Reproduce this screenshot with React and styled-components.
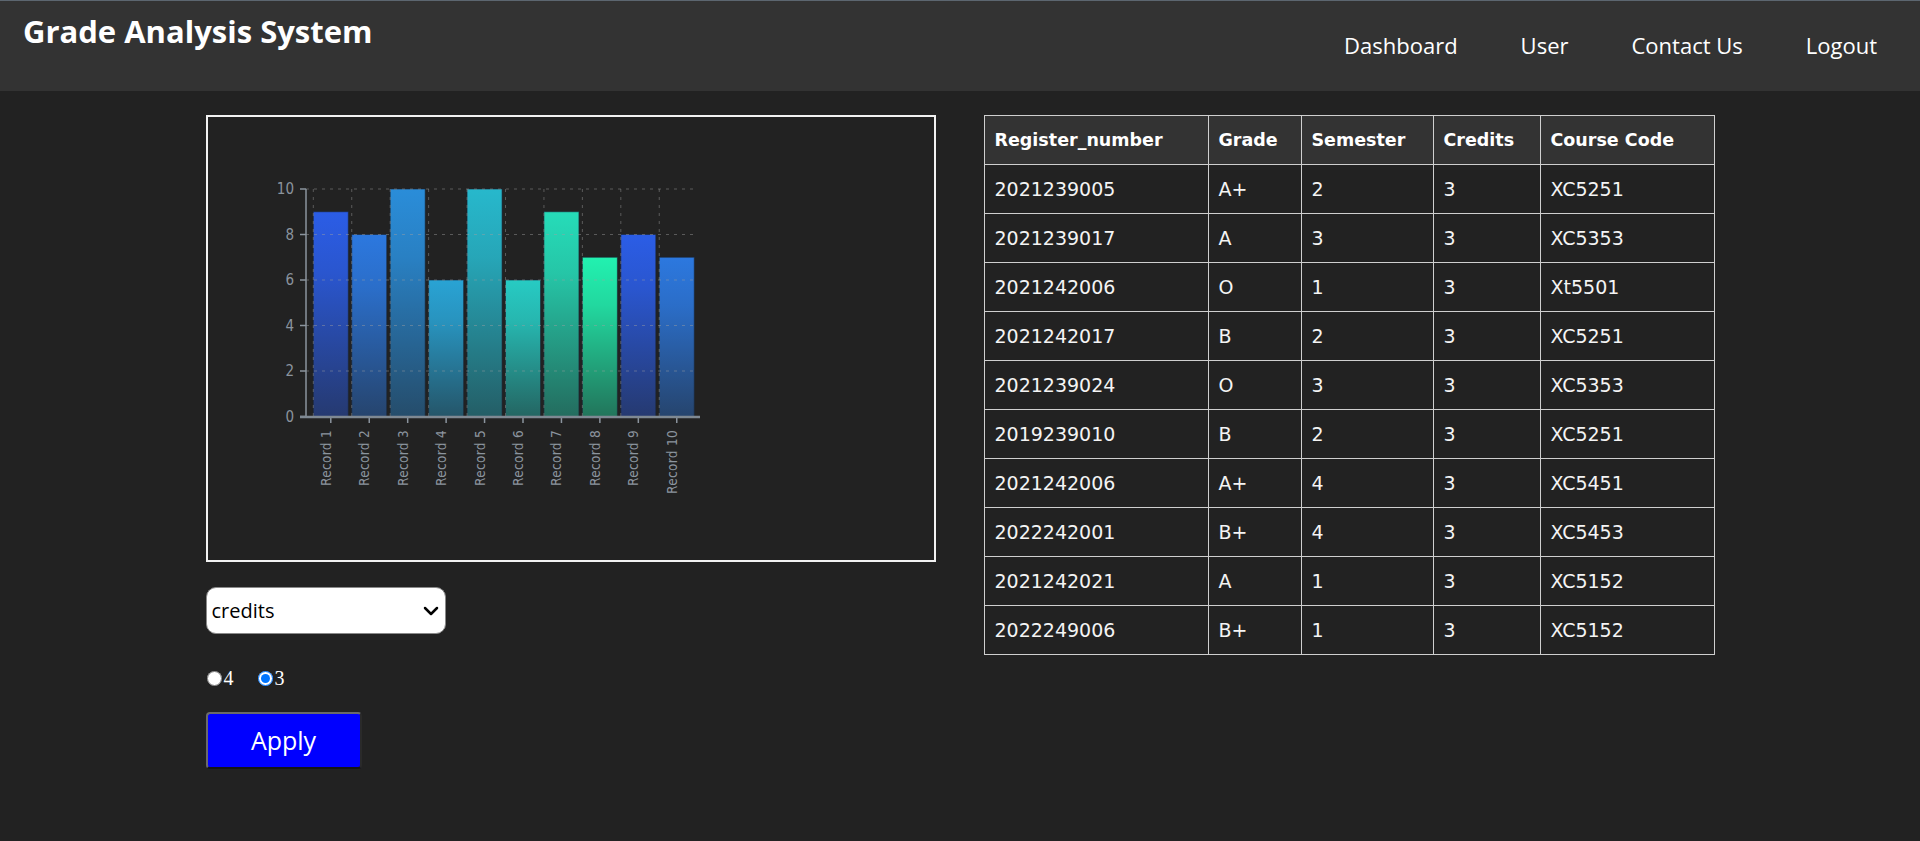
import React from 'react'
import styled, { createGlobalStyle } from 'styled-components'
import { ChevronDown } from 'lucide-react'

const GlobalStyle = createGlobalStyle`
  body {
    margin: 0;
    background: #222222;
    font-family: 'Open Sans', 'DejaVu Sans', sans-serif;
  }
`

const records = [
  { reg: '2021239005', grade: 'A+', sem: '2', credits: '3', code: 'XC5251' },
  { reg: '2021239017', grade: 'A', sem: '3', credits: '3', code: 'XC5353' },
  { reg: '2021242006', grade: 'O', sem: '1', credits: '3', code: 'Xt5501' },
  { reg: '2021242017', grade: 'B', sem: '2', credits: '3', code: 'XC5251' },
  { reg: '2021239024', grade: 'O', sem: '3', credits: '3', code: 'XC5353' },
  { reg: '2019239010', grade: 'B', sem: '2', credits: '3', code: 'XC5251' },
  { reg: '2021242006', grade: 'A+', sem: '4', credits: '3', code: 'XC5451' },
  { reg: '2022242001', grade: 'B+', sem: '4', credits: '3', code: 'XC5453' },
  { reg: '2021242021', grade: 'A', sem: '1', credits: '3', code: 'XC5152' },
  { reg: '2022249006', grade: 'B+', sem: '1', credits: '3', code: 'XC5152' },
]

const bars = [
  { value: 9, color: '#2b5de6' },
  { value: 8, color: '#2c78df' },
  { value: 10, color: '#2a8dd9' },
  { value: 6, color: '#29a3d4' },
  { value: 10, color: '#27b8cc' },
  { value: 6, color: '#27cbc3' },
  { value: 9, color: '#26dcb9' },
  { value: 7, color: '#22f1b0' },
  { value: 8, color: '#2b5de6' },
  { value: 7, color: '#2c78df' },
]

// chart geometry (svg local coords)
const X0 = 105.3
const BAND = 38.44
const BW = 35
const Y0 = 299.5
const UNIT = 22.75
const AXIS_X = 98

const Header = styled.header`
  display: flex;
  justify-content: space-between;
  align-items: flex-start;
  height: 91px;
  box-sizing: border-box;
  background: #333333;
  border-top: 1px solid #5c6670;
`

const Title = styled.h1`
  margin: 9px 0 0 23px;
  color: #ffffff;
  font-size: 31px;
  font-weight: 700;
  line-height: normal;
`

const Nav = styled.ul`
  display: flex;
  gap: 63px;
  align-self: center;
  list-style: none;
  margin: 0;
  padding: 0 43px 3px 0;
`

const NavLink = styled.a`
  color: #ffffff;
  font-size: 22px;
  text-decoration: none;
`

const Main = styled.main`
  display: flex;
  justify-content: center;
  align-items: flex-start;
  gap: 48px;
  padding-top: 24px;
`

const LeftColumn = styled.section`
  display: flex;
  flex-direction: column;
  align-items: flex-start;
  width: 730px;
`

const ChartBox = styled.div`
  width: 730px;
  height: 447px;
  box-sizing: border-box;
  border: 2px solid #f2f2f2;
`

const AxisText = styled.text`
  fill: #8b949e;
  font-family: 'Liberation Sans Narrow', 'DejaVu Sans Condensed', sans-serif;
  font-size: ${p => p.size}px;
  letter-spacing: ${p => p.spacing || 0}px;
`

const SelectWrap = styled.div`
  position: relative;
  width: 240px;
  height: 47px;
  margin-top: 25px;
`

const Select = styled.select`
  appearance: none;
  width: 100%;
  height: 100%;
  box-sizing: border-box;
  padding: 0 0 0 5px;
  border: 1px solid #8a8a8a;
  border-radius: 10px;
  background: #ffffff;
  color: #000000;
  font-family: 'Open Sans', sans-serif;
  font-size: 20px;
`

const SelectArrow = styled(ChevronDown)`
  position: absolute;
  top: 12px;
  right: 3px;
  pointer-events: none;
  color: #000000;
`

const RadioRow = styled.div`
  display: flex;
  align-items: center;
  height: 24px;
  margin-top: 32px;
`

const Radio = styled.input`
  width: 15px;
  height: 15px;
  margin: 0 2px 0 ${p => p.gap || 1}px;
`

const RadioLabel = styled.label`
  color: #ffffff;
  font-family: 'Liberation Serif', serif;
  font-size: 20px;
`

const ApplyButton = styled.button`
  width: 156px;
  height: 57px;
  margin-top: 22px;
  border: 2px solid;
  border-color: #6a6a6a #2a2a2a #151515 #6a6a6a;
  border-radius: 4px;
  background: #0000ff;
  color: #ffffff;
  font-family: 'Open Sans', sans-serif;
  font-size: 25px;
  padding-bottom: 3px;
`

const Table = styled.table`
  width: 730px;
  border-collapse: collapse;
  table-layout: fixed;
  font-family: 'DejaVu Sans', sans-serif;
  color: #f4f4f4;
`

const Row = styled.tr`
  height: 49px;
  background: ${p => (p.head ? '#333333' : '#222222')};
`

const HeadCell = styled.th`
  padding: 0 10px;
  border: 1px solid #cfcfcf;
  text-align: left;
  font-size: 17.5px;
  font-weight: 700;
  color: #ffffff;
`

const Cell = styled.td`
  padding: 0 10px;
  border: 1px solid #cfcfcf;
  font-size: 19px;
`

const BarChart = () => (
  <svg width="726" height="443" viewBox="0 0 726 443">
    <defs>
      {bars.map((b, i) => (
        <linearGradient key={i} id={`bar${i}`} x1="0" y1="0" x2="0" y2="1">
          <stop offset="0" stopColor={b.color} stopOpacity="1" />
          <stop offset="0.3" stopColor={b.color} stopOpacity="0.88" />
          <stop offset="1" stopColor={b.color} stopOpacity="0.4" />
        </linearGradient>
      ))}
    </defs>
    {bars.map((b, i) => (
      <rect
        key={i}
        x={X0 + i * BAND}
        y={Y0 - b.value * UNIT}
        width={BW}
        height={b.value * UNIT}
        fill={`url(#bar${i})`}
        stroke="#1b2636"
        strokeOpacity="0.6"
      />
    ))}
    <g stroke="#a0a0a0" strokeOpacity="0.45" strokeDasharray="3 5">
      {[2, 4, 6, 8, 10].map(v => (
        <line key={v} x1={AXIS_X} x2="487" y1={Y0 - v * UNIT} y2={Y0 - v * UNIT} />
      ))}
      {bars.map((b, i) => (
        <line key={i} x1={X0 + i * BAND} x2={X0 + i * BAND} y1={Y0 - 10 * UNIT} y2={Y0} />
      ))}
    </g>
    <g stroke="#8b949e" strokeWidth="1.5">
      <line x1={AXIS_X} x2={AXIS_X} y1={Y0 - 10 * UNIT} y2={Y0} />
      {[0, 2, 4, 6, 8, 10].map(v => (
        <line key={v} x1="92" x2={AXIS_X} y1={Y0 - v * UNIT} y2={Y0 - v * UNIT} />
      ))}
      {bars.map((b, i) => (
        <line key={i} x1={X0 + i * BAND + BW / 2} x2={X0 + i * BAND + BW / 2} y1="301" y2="306" />
      ))}
    </g>
    <line x1="92" x2="492" y1="300" y2="300" stroke="#7f8993" strokeWidth="2.5" />
    {[0, 2, 4, 6, 8, 10].map(v => (
      <AxisText key={v} size={15} x="86" y={Y0 - v * UNIT + 5} textAnchor="end">
        {v}
      </AxisText>
    ))}
    {bars.map((b, i) => {
      const cx = X0 + i * BAND + BW / 2
      return (
        <AxisText
          key={i}
          size={13.5}
          spacing={0.3}
          textAnchor="end"
          transform={`translate(${cx} 313) rotate(-90)`}
        >
          Record {i + 1}
        </AxisText>
      )
    })}
  </svg>
)

const App = () => (
  <>
    <GlobalStyle />
    <Header>
      <Title>Grade Analysis System</Title>
      <Nav>
        <li><NavLink href="#">Dashboard</NavLink></li>
        <li><NavLink href="#">User</NavLink></li>
        <li><NavLink href="#">Contact Us</NavLink></li>
        <li><NavLink href="#">Logout</NavLink></li>
      </Nav>
    </Header>
    <Main>
      <LeftColumn>
        <ChartBox>
          <BarChart />
        </ChartBox>
        <SelectWrap>
          <Select defaultValue="credits">
            <option value="credits">credits</option>
            <option value="semester">semester</option>
            <option value="grade">grade</option>
          </Select>
          <SelectArrow size={24} strokeWidth={2.5} />
        </SelectWrap>
        <RadioRow>
          <Radio type="radio" name="val" id="r4" />
          <RadioLabel htmlFor="r4">4</RadioLabel>
          <Radio type="radio" name="val" id="r3" gap={24} defaultChecked />
          <RadioLabel htmlFor="r3">3</RadioLabel>
        </RadioRow>
        <ApplyButton>Apply</ApplyButton>
      </LeftColumn>
      <Table>
        <colgroup>
          <col style={{ width: 224 }} />
          <col style={{ width: 93 }} />
          <col style={{ width: 132 }} />
          <col style={{ width: 107 }} />
          <col style={{ width: 174 }} />
        </colgroup>
        <thead>
          <Row head>
            <HeadCell>Register_number</HeadCell>
            <HeadCell>Grade</HeadCell>
            <HeadCell>Semester</HeadCell>
            <HeadCell>Credits</HeadCell>
            <HeadCell>Course Code</HeadCell>
          </Row>
        </thead>
        <tbody>
          {records.map((r, i) => (
            <Row key={i}>
              <Cell>{r.reg}</Cell>
              <Cell>{r.grade}</Cell>
              <Cell>{r.sem}</Cell>
              <Cell>{r.credits}</Cell>
              <Cell>{r.code}</Cell>
            </Row>
          ))}
        </tbody>
      </Table>
    </Main>
  </>
)

export default App
